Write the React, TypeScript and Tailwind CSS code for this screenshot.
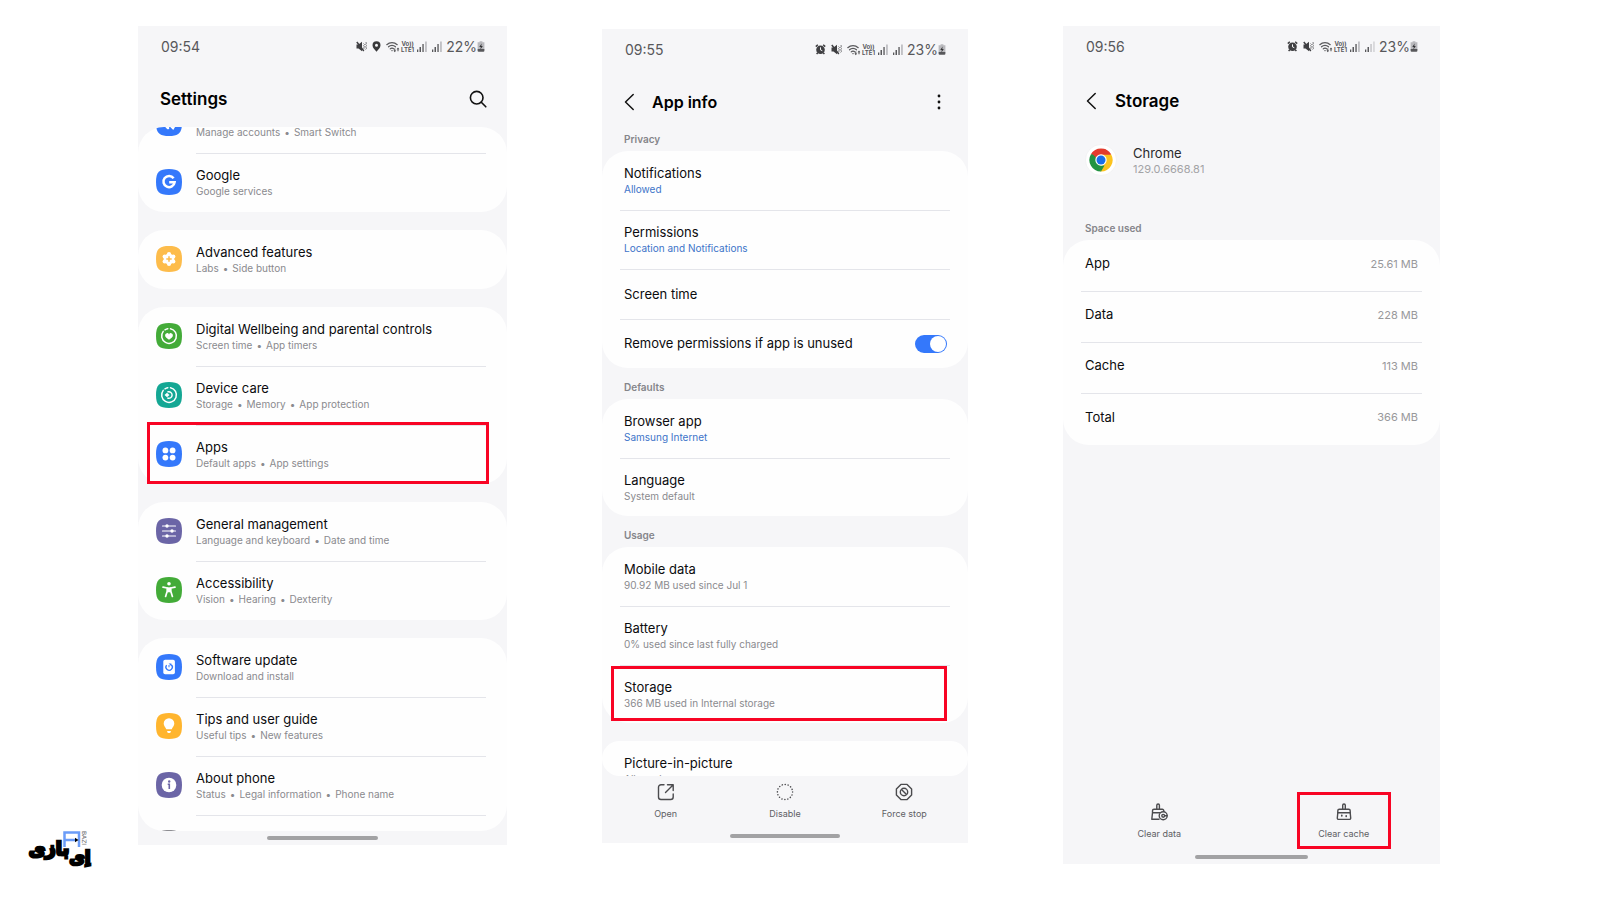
import React from "react";
import clsx from "clsx";

type IconProps = { className?: string };

type SettingItem = {
  title: string;
  tags: string[];
  icon: React.ReactNode;
  marked?: boolean;
};

type InfoItem = {
  title: string;
  note?: string;
  link?: boolean;
  marked?: boolean;
};

const MuteIcon = () => (
  <svg width="11" height="11" viewBox="0 0 11 11" fill="none" aria-hidden>
    <path d="M0.5 3.5h2L6 0.800v9.400L2.500 7.500h-2z" fill="#3f3f42" />
    <path d="M0.800 1l7 9" stroke="#3f3f42" strokeWidth="1.500" />
    <path d="M7.500 2.500l1 1-1 1.200 1 1.200-1 1.200 1 1M9.600 1l1 1-1 1.300 1 1.300-1 1.300 1 1.300-1 1.300" stroke="#6d6d70" strokeWidth="0.900" />
  </svg>
);

const PinIcon = () => (
  <svg width="9" height="11" viewBox="0 0 9 11" aria-hidden>
    <path d="M4.500 0.300a4 4 0 0 1 4 4C8.500 7 6 9 4.500 10.800 3 9 0.500 7 0.500 4.300a4 4 0 0 1 4-4zm0 2.500a1.500 1.500 0 1 0 0 3 1.500 1.500 0 0 0 0-3z" fill="#38383a" fillRule="evenodd" />
  </svg>
);

const AlarmIcon = () => (
  <svg width="11" height="11" viewBox="0 0 11 11" fill="none" aria-hidden>
    <path d="M0.800 2.600L2.800 0.800M10.200 2.600L8.200 0.800M1.600 10l1.200-1.300M9.400 10L8.200 8.700" stroke="#3f3f42" strokeWidth="1.500" />
    <circle cx="5.500" cy="5.700" r="4.300" fill="#3f3f42" />
    <path d="M5.500 3.300v2.600l1.800 0.800" stroke="#f6f6f8" strokeWidth="1" />
  </svg>
);

const WifiIcon = () => (
  <svg width="14" height="12" viewBox="0 0 14 12" fill="none" aria-hidden>
    <g stroke="#5a5a5d" strokeWidth="1.200" strokeLinecap="round">
      <path d="M0.800 3.700a7.500 7.500 0 0 1 10.400 0" />
      <path d="M2.500 5.800a5 5 0 0 1 7 0" />
      <path d="M4.200 7.900a2.500 2.500 0 0 1 3.600 0" />
    </g>
    <path d="M5 9.200h2L6 10.500zM8.800 11.300L7.400 9.500h0.900V7.500h1v2h0.900zM12 6.500l1.400 1.800h-0.900v2h-1v-2h-0.900z" fill="#4a4a4d" />
  </svg>
);

const SignalIcon = ({ weak = false }: { weak?: boolean }) => (
  <svg width="10" height="11" viewBox="0 0 10 11" aria-hidden>
    <rect x="0" y="8.500" width="1.300" height="2.500" fill="#58585b" />
    <rect x="2.500" y="6" width="1.500" height="5" fill="#58585b" />
    <rect x="5.300" y="3" width="1.500" height="8" fill={weak ? "#c4c4c8" : "#6a6a6d"} />
    <rect x="8.200" y="0.500" width="1.500" height="10.500" fill={weak ? "#d2d2d5" : "#b4b4b8"} />
  </svg>
);

const BatteryIcon = () => (
  <svg width="8" height="11" viewBox="0 0 8 11" aria-hidden>
    <path d="M2.600 0.300h2.800v1h2v6.900H0.600V1.300h2z" fill="#b9b9bd" />
    <path d="M0.600 8h6.800v1.800a1 1 0 0 1-1 1H1.600a1 1 0 0 1-1-1z" fill="#58585b" />
    <path d="M4.600 2.500L2.300 6h1.500l-0.400 2.500L5.800 5H4.300z" fill="#333336" />
  </svg>
);

const StatusBar = ({ time, battery, alarm, weak }: { time: string; battery: string; alarm?: boolean; weak?: boolean }) => (
  <div className="flex h-[41px] shrink-0 items-center justify-between pl-[23px] pr-[22px] text-sm text-[#58585b]">
    <time>{time}</time>
    <div className="flex items-center">
      <span className="flex items-center gap-[5px]">
        {alarm ? <AlarmIcon /> : <MuteIcon />}
        {alarm ? <MuteIcon /> : <PinIcon />}
        <WifiIcon />
      </span>
      <span className="ml-px mr-[3px] flex flex-col text-center text-[6px] font-bold leading-[6px]">
        <span>Vo))</span>
        <span>LTE1</span>
      </span>
      <span className="mr-1 flex gap-[5px]">
        <SignalIcon />
        <SignalIcon weak={weak} />
      </span>
      <span>{battery}</span>
      <BatteryIcon />
    </div>
  </div>
);

const HomeBar = () => (
  <div className="flex h-[14px] shrink-0 items-center justify-center">
    <span className="h-1 w-[30%] rounded-full bg-[#a2a2a4]" />
  </div>
);

const BackIcon = () => (
  <svg width="11" height="18" viewBox="0 0 11 18" fill="none" stroke="#111" strokeWidth="1.500" strokeLinecap="round" strokeLinejoin="round" aria-hidden>
    <path d="M9.200 1.500L1.500 9l7.700 7.500" />
  </svg>
);

const SearchIcon = () => (
  <svg width="18" height="18" viewBox="0 0 18 18" fill="none" stroke="#111" strokeWidth="1.600" strokeLinecap="round" aria-hidden>
    <circle cx="7.700" cy="7.700" r="6.300" />
    <path d="M12.300 12.300l4.500 4.500" />
  </svg>
);

const DotsIcon = () => (
  <svg width="4" height="16" viewBox="0 0 4 16" fill="#111" aria-hidden>
    <circle cx="2" cy="2" r="1.400" />
    <circle cx="2" cy="8" r="1.400" />
    <circle cx="2" cy="14" r="1.400" />
  </svg>
);

const Tile = ({ color, children }: { color: string; children?: React.ReactNode }) => (
  <svg className="shrink-0" width="26" height="26" viewBox="0 0 26 26" fill="none" aria-hidden>
    <path d="M13 0c9.800 0 13 3.200 13 13s-3.200 13-13 13S0 22.800 0 13 3.200 0 13 0z" fill={color} />
    {children}
  </svg>
);

const Ring = () => (
  <g stroke="#fff" strokeWidth="1.500" strokeLinecap="round">
    <path d="M14.500 5.700A7.400 7.400 0 1 1 7.200 8.400" />
    <path d="M9 6.800a7.400 7.400 0 0 1 2.800-1.100" />
  </g>
);

const accountsIcon = (
  <Tile color="#3478fb">
    <path d="M8.500 14.500l3.500 3.500M14 15l3 3 1.500-2.500" stroke="#fff" strokeWidth="2.500" strokeLinecap="round" />
  </Tile>
);

const googleIcon = (
  <Tile color="#3478fb">
    <path d="M17.600 9.300A5.600 5.600 0 1 0 18.600 13.300H13.200" stroke="#fff" strokeWidth="2.500" />
  </Tile>
);

const advancedIcon = (
  <Tile color="#fdbc4b">
    <g fill="#fff">
      <circle cx="13" cy="13" r="5.400" />
      <circle cx="13" cy="8" r="2.100" />
      <circle cx="13" cy="18" r="2.100" />
      <circle cx="8.700" cy="10.500" r="2.100" />
      <circle cx="17.300" cy="10.500" r="2.100" />
      <circle cx="8.700" cy="15.500" r="2.100" />
      <circle cx="17.300" cy="15.500" r="2.100" />
    </g>
    <path d="M13 10.300v5.400M10.300 13h5.400" stroke="#fdbc4b" strokeWidth="1.500" />
  </Tile>
);

const wellbeingIcon = (
  <Tile color="#43ab38">
    <Ring />
    <path d="M13 16.800c-2.600-1.800-3.900-3-3.900-4.600a2 2 0 0 1 3.900-0.700 2 2 0 0 1 3.900 0.700c0 1.600-1.300 2.800-3.900 4.600z" fill="#fff" />
  </Tile>
);

const careIcon = (
  <Tile color="#14a794">
    <Ring />
    <path d="M12 9.800a3.300 3.300 0 1 1-0.300 6.300" stroke="#fff" strokeWidth="1.400" strokeLinecap="round" />
    <path d="M8.500 13l2.500-2.200 2.500 2.200-2.500 2.200z" fill="#fff" />
  </Tile>
);

const appsIcon = (
  <Tile color="#3478fb">
    <g fill="#fff">
      <circle cx="9.400" cy="9.400" r="2.900" />
      <circle cx="16.600" cy="9.400" r="2.900" />
      <circle cx="9.400" cy="16.600" r="2.900" />
      <circle cx="16.600" cy="16.600" r="2.900" />
    </g>
  </Tile>
);

const managementIcon = (
  <Tile color="#6b65a6">
    <path d="M6.500 8h13M6.500 13h13M6.500 18h13" stroke="#fff" strokeWidth="1.200" strokeLinecap="round" />
    <g fill="#fff">
      <circle cx="11" cy="8" r="1.700" />
      <circle cx="16" cy="13" r="1.700" />
      <circle cx="11" cy="18" r="1.700" />
    </g>
  </Tile>
);

const accessibilityIcon = (
  <Tile color="#43ab38">
    <circle cx="13" cy="6.700" r="1.800" fill="#fff" />
    <path d="M7 10.200l4.200 0.800v3.200L9.600 19.500M19 10.200l-4.200 0.800v3.200l1.600 5.300" stroke="#fff" strokeWidth="1.700" strokeLinecap="round" strokeLinejoin="round" />
    <path d="M11 10.300h4v5h-4z" fill="#fff" />
  </Tile>
);

const updateIcon = (
  <Tile color="#3478fb">
    <rect x="7.300" y="5.800" width="11.600" height="14.400" rx="1.800" fill="#fff" />
    <path d="M15.300 10.700a3.200 3.200 0 1 1-4.700 0.400" stroke="#3478fb" strokeWidth="1.300" />
    <path d="M12.600 9.500h2.800v2.800z" fill="#3478fb" />
    <path d="M13 11v2.300" stroke="#3478fb" strokeWidth="1" />
  </Tile>
);

const tipsIcon = (
  <Tile color="#ffb52e">
    <path d="M13 5.300a5.300 5.300 0 0 1 5.300 5.300c0 2.400-1.700 3.600-2.600 5.700h-5.400c-0.900-2.100-2.600-3.300-2.600-5.700A5.300 5.300 0 0 1 13 5.300z" fill="#fff" />
    <path d="M11 18h4l-0.800 2h-2.400z" fill="#fff" />
  </Tile>
);

const aboutIcon = (
  <Tile color="#6b65a6">
    <circle cx="13" cy="13" r="7.300" fill="#fff" />
    <circle cx="13.200" cy="9.500" r="1.200" fill="#6b65a6" />
    <path d="M11.700 12.200h1.600v4.800" stroke="#6b65a6" strokeWidth="1.600" />
  </Tile>
);

const settingGroups: SettingItem[][] = [
  [{ title: "Advanced features", tags: ["Labs", "Side button"], icon: advancedIcon }],
  [
    { title: "Digital Wellbeing and parental controls", tags: ["Screen time", "App timers"], icon: wellbeingIcon },
    { title: "Device care", tags: ["Storage", "Memory", "App protection"], icon: careIcon },
    { title: "Apps", tags: ["Default apps", "App settings"], icon: appsIcon, marked: true },
  ],
  [
    { title: "General management", tags: ["Language and keyboard", "Date and time"], icon: managementIcon },
    { title: "Accessibility", tags: ["Vision", "Hearing", "Dexterity"], icon: accessibilityIcon },
  ],
  [
    { title: "Software update", tags: ["Download and install"], icon: updateIcon },
    { title: "Tips and user guide", tags: ["Useful tips", "New features"], icon: tipsIcon },
    { title: "About phone", tags: ["Status", "Legal information", "Phone name"], icon: aboutIcon },
  ],
];

const Mark = ({ className }: IconProps) => (
  <span className={clsx("pointer-events-none absolute border-[3px] border-[#f80424]", className)} aria-hidden />
);

const Tags = ({ tags }: { tags: string[] }) => (
  <span className="block whitespace-nowrap text-[10px] leading-4 text-[#8a8a8e]">
    {tags.map((tag, i) => (
      <React.Fragment key={tag}>
        {i > 0 && <span className="mx-1">•</span>}
        {tag}
      </React.Fragment>
    ))}
  </span>
);

const SettingRow = ({ title, tags, icon, marked, first }: SettingItem & { first?: boolean }) => (
  <a href="#" className="relative flex h-[59px] shrink-0 items-center gap-[14px] pb-[2px] pl-[18px] pr-[21px]">
    {icon}
    <span className={clsx("flex h-full min-w-0 flex-1 flex-col justify-center border-t pt-[2px]", first ? "border-transparent" : "border-[#e4e5ea]")}>
      <span className="block h-4 whitespace-nowrap text-[13px] leading-4 text-[#0c0c0e]">{title}</span>
      <Tags tags={tags} />
    </span>
    {marked && <Mark className="-top-[3px] bottom-0 left-[9px] right-[18px]" />}
  </a>
);

const SettingsScreen = () => (
  <section className="flex flex-col bg-[#f6f6f8]">
    <StatusBar time="09:54" battery="22%" />
    <header className="flex h-[60px] items-center justify-between pl-[22px] pr-5 pt-1">
      <h1 className="pt-[2px] text-[17px] font-semibold text-black">Settings</h1>
      <button type="button" aria-label="Search">
        <SearchIcon />
      </button>
    </header>
    <div className="flex flex-col gap-[18px]">
      <div className="overflow-hidden rounded-[26px] bg-[#fefefe]">
        <div className="flex h-[26px] flex-col justify-end overflow-hidden">
          <SettingRow title="" tags={["Manage accounts", "Smart Switch"]} icon={accountsIcon} first />
        </div>
        <SettingRow title="Google" tags={["Google services"]} icon={googleIcon} />
      </div>
      {settingGroups.map((group, g) => (
        <div key={g} className="rounded-[26px] bg-[#fefefe]">
          {group.map((item, i) => (
            <SettingRow key={item.title} {...item} first={i === 0} />
          ))}
          {g === settingGroups.length - 1 && (
            <div className="flex h-4 gap-[14px] overflow-hidden pl-[18px] pr-[21px]">
              <span className="pt-[15px]">
                <Tile color="#8d8d92" />
              </span>
              <span className="h-px flex-1 bg-[#e4e5ea]" />
            </div>
          )}
        </div>
      ))}
    </div>
    <HomeBar />
  </section>
);

const InfoRow = ({ title, note, link, marked }: InfoItem) => (
  <a
    href="#"
    className={clsx(
      "relative mx-[18px] block border-t border-[#e4e5ea] px-1 first:border-transparent",
      note ? "h-[59px] pt-[13px] last:h-[58px]" : "h-[50px] pt-4"
    )}
  >
    <span className="block text-[13px] leading-4 text-[#0c0c0e]">{title}</span>
    {note && <span className={clsx("block text-[10px] leading-4", link ? "text-[#3d74c9]" : "text-[#8a8a8e]")}>{note}</span>}
    {marked && <Mark className="-left-[9px] bottom-[2px] right-[3px] top-0" />}
  </a>
);

const SectionLabel = ({ children, className }: { children: React.ReactNode; className?: string }) => (
  <h2 className={clsx("flex items-end px-[22px] text-[10px] font-semibold leading-[23px] text-[#85858a]", className)}>{children}</h2>
);

const ExternalIcon = () => (
  <svg width="18" height="18" viewBox="0 0 18 18" fill="none" stroke="#4b4b4e" strokeWidth="1.400" strokeLinecap="round" strokeLinejoin="round" aria-hidden>
    <path d="M7 1.800H4A2.500 2.500 0 0 0 1.500 4.300V14A2.500 2.500 0 0 0 4 16.500h9.700a2.500 2.500 0 0 0 2.500-2.500v-3M10.500 1.800h5.700v5.700M16 2L8.500 9.500" />
  </svg>
);

const DottedIcon = () => (
  <svg width="18" height="18" viewBox="0 0 18 18" fill="none" aria-hidden>
    <circle cx="9" cy="9" r="7.600" stroke="#4b4b4e" strokeWidth="1.500" strokeDasharray="0.100 2.880" strokeLinecap="round" />
  </svg>
);

const StopIcon = () => (
  <svg width="18" height="18" viewBox="0 0 18 18" fill="none" stroke="#4b4b4e" strokeWidth="1.400" aria-hidden>
    <path d="M5.900 1.400h6.200l4.500 4.500v6.200l-4.500 4.500H5.900l-4.500-4.500V5.900z" strokeLinejoin="round" />
    <circle cx="9" cy="9" r="3.700" />
    <path d="M6.500 6.500l5 5" />
  </svg>
);

const BrushIcon = ({ data }: { data?: boolean }) => (
  <svg width="18" height="18" viewBox="0 0 18 18" fill="none" stroke="#4b4b4e" strokeWidth="1.400" strokeLinejoin="round" strokeLinecap="round" aria-hidden>
    {data ? (
      <>
        <path d="M6.800 6.200V2.300a1.300 1.300 0 0 1 2.600 0v3.900M2.500 9.700V7.800A1.500 1.500 0 0 1 4 6.300h8.300a1.500 1.500 0 0 1 1.500 1.500v1.900zM2.500 9.700L1.800 16.200H9" />
        <circle cx="13.200" cy="12.800" r="4" fill="#f6f6f8" />
        <circle cx="13.200" cy="12.800" r="1.400" />
        <path d="M14.700 12.800H17" />
      </>
    ) : (
      <>
        <path d="M7.700 6.200V2.300a1.300 1.300 0 0 1 2.600 0v3.900M2.800 9.700V7.800a1.500 1.500 0 0 1 1.500-1.500h9.400a1.500 1.500 0 0 1 1.500 1.500v1.900z" />
        <path d="M2.800 9.700L2.300 15a1.300 1.300 0 0 0 1.300 1.400h10.800a1.300 1.300 0 0 0 1.300-1.400l-0.500-5.300" />
        <path d="M6.800 12.400v0.400M11.200 12.900v0.400" strokeWidth="1.700" />
      </>
    )}
  </svg>
);

const ActionButton = ({ label, icon, marked }: { label: string; icon: React.ReactNode; marked?: boolean }) => (
  <button type="button" className="relative flex flex-col items-center gap-[5px] text-[9px] leading-4 text-[#606064]">
    {icon}
    {label}
    {marked && <Mark className="-bottom-[7px] -top-[11px] left-1/2 w-[94px] -translate-x-1/2" />}
  </button>
);

const AppInfoScreen = () => (
  <section className="mt-[3px] flex flex-col bg-[#f6f6f8]">
    <StatusBar time="09:55" battery="23%" alarm />
    <header className="flex h-[60px] items-center pl-[22px] pr-[27px] pt-1">
      <button type="button" aria-label="Back" className="mr-[17px]">
        <BackIcon />
      </button>
      <h1 className="flex-1 text-base font-semibold text-black">App info</h1>
      <button type="button" aria-label="More options">
        <DotsIcon />
      </button>
    </header>

    <SectionLabel className="h-[21px]">Privacy</SectionLabel>
    <div className="rounded-[26px] bg-[#fefefe]">
      <InfoRow title="Notifications" note="Allowed" link />
      <InfoRow title="Permissions" note="Location and Notifications" link />
      <InfoRow title="Screen time" />
      <label className="mx-[18px] flex h-[49px] items-center justify-between border-t border-[#e4e5ea] pb-px pl-1 pr-[3px] text-[13px] text-[#0c0c0e]">
        Remove permissions if app is unused
        <input
          type="checkbox"
          role="switch"
          defaultChecked
          className="flex h-[18px] w-8 appearance-none items-center rounded-full bg-[#c9c9ce] px-px before:size-4 before:rounded-full before:bg-white checked:justify-end checked:bg-[#3478fb]"
        />
      </label>
    </div>

    <SectionLabel className="h-[31px]">Defaults</SectionLabel>
    <div className="rounded-[26px] bg-[#fefefe]">
      <InfoRow title="Browser app" note="Samsung Internet" link />
      <InfoRow title="Language" note="System default" />
    </div>

    <SectionLabel className="h-[31px]">Usage</SectionLabel>
    <div className="rounded-[26px] bg-[#fefefe]">
      <InfoRow title="Mobile data" note="90.92 MB used since Jul 1" />
      <InfoRow title="Battery" note="0% used since last fully charged" />
      <InfoRow title="Storage" note="366 MB used in Internal storage" marked />
    </div>

    <div className="mt-[18px] h-[35px] overflow-hidden rounded-[18px] bg-[#fefefe]">
      <InfoRow title="Picture-in-picture" note="Allowed" />
    </div>

    <div className="grid grid-cols-3 px-1 pb-[7px] pt-[7px]">
      <ActionButton label="Open" icon={<ExternalIcon />} />
      <ActionButton label="Disable" icon={<DottedIcon />} />
      <ActionButton label="Force stop" icon={<StopIcon />} />
    </div>
    <HomeBar />
  </section>
);

const ChromeIcon = () => (
  <svg width="32" height="32" viewBox="0 0 32 32" aria-hidden>
    <circle cx="16" cy="16" r="15.500" fill="#fff" stroke="#ececee" strokeWidth="0.600" />
    <path d="M16 16L5.950 10.200A11.600 11.600 0 0 1 26.050 10.200z" fill="#e33b2e" />
    <path d="M16 16L26.050 10.200A11.600 11.600 0 0 1 16 27.600z" fill="#fcc31e" />
    <path d="M16 16L16 27.600A11.600 11.600 0 0 1 5.950 10.200z" fill="#229342" />
    <path d="M16 10.400h10.100L21 18.500z" fill="#fcc31e" />
    <path d="M20.900 18.800L16 27.600 13 20z" fill="#fcc31e" />
    <path d="M5.950 10.200L11.200 18.800 14 11z" fill="#229342" />
    <path d="M16 10.400h10.100L24 8.500 20 5l-9 1-4.500 3.300L11 13.500z" fill="#e33b2e" />
    <path d="M11.200 18.800L16 21.600h3.500L16 27.600z" fill="#229342" />
    <circle cx="16" cy="16" r="5.700" fill="#fff" />
    <circle cx="16" cy="16" r="4.500" fill="#1a6ee8" />
  </svg>
);

const usage = [
  { label: "App", value: "25.61 MB" },
  { label: "Data", value: "228 MB" },
  { label: "Cache", value: "113 MB" },
  { label: "Total", value: "366 MB" },
];

const StorageScreen = () => (
  <section className="flex min-h-[838px] flex-col bg-[#f6f6f8]">
    <StatusBar time="09:56" battery="23%" alarm weak />
    <header className="flex h-[64px] items-center pl-[23px] pr-[27px] pt-1">
      <button type="button" aria-label="Back" className="mr-[18px]">
        <BackIcon />
      </button>
      <h1 className="pt-[2px] text-[17px] font-semibold text-black">Storage</h1>
    </header>

    <div className="flex items-start gap-4 px-[22px] pt-[13px]">
      <ChromeIcon />
      <div className="pt-px">
        <p className="text-[13px] leading-4 text-[#2a2a2c]">Chrome</p>
        <p className="text-[11px] leading-4 text-[#a3a3a6]">129.0.6668.81</p>
      </div>
    </div>

    <SectionLabel className="h-[63px]">Space used</SectionLabel>
    <div className="rounded-[26px] bg-[#fefefe] px-[18px]">
      <table className="w-full">
        <tbody>
          {usage.map(({ label, value }) => (
            <tr key={label} className="h-[51px] border-t border-[#e4e5ea] first:border-transparent">
              <th scope="row" className="px-1 pb-1 text-left text-[13px] font-normal text-[#0c0c0e]">
                {label}
              </th>
              <td className="px-1 pb-1 text-right text-[11px] text-[#98989b]">{value}</td>
            </tr>
          ))}
        </tbody>
      </table>
    </div>

    <div className="mt-auto grid grid-cols-2 px-1 pb-[8px]">
      <ActionButton label="Clear data" icon={<BrushIcon data />} />
      <ActionButton label="Clear cache" icon={<BrushIcon />} marked />
    </div>
    <HomeBar />
  </section>
);

const SiteLogo = () => (
  <svg
    className="absolute bottom-[26px] left-7 font-['DejaVu_Sans',sans-serif] font-bold"
    width="66"
    height="46"
    viewBox="0 0 66 46"
    fill="none"
    role="img"
    aria-label="ای بازی"
  >
    <path d="M36.500 19V4.500h14.500V19M36.500 12h11" stroke="#6b9cf8" strokeWidth="2.500" />
    <path d="M47 9.800l3.500 2.200-3.500 2.200z" fill="#000" />
    <text x="54" y="3" fontSize="6" fontWeight="400" fill="#666" transform="rotate(90 54 3)">BAZI</text>
    <text x="21" y="27" fontSize="18" textAnchor="middle" fill="#000" stroke="#000" strokeWidth="2.600" direction="rtl">بازی</text>
    <text x="52" y="35" fontSize="17" textAnchor="middle" fill="#000" stroke="#000" strokeWidth="2.400" direction="rtl">اِی</text>
  </svg>
);

const App: React.FC = () => {
  return (
    <main className="relative min-h-screen bg-white font-['Inter','Liberation_Sans',sans-serif]">
      <div className="grid grid-cols-1 items-start gap-[95px] px-6 pb-9 pt-[26px] lg:grid-cols-[369fr_366fr_377fr] lg:pl-[138px] lg:pr-[160px]">
        <SettingsScreen />
        <AppInfoScreen />
        <StorageScreen />
      </div>
      <SiteLogo />
    </main>
  );
};

export default App;
